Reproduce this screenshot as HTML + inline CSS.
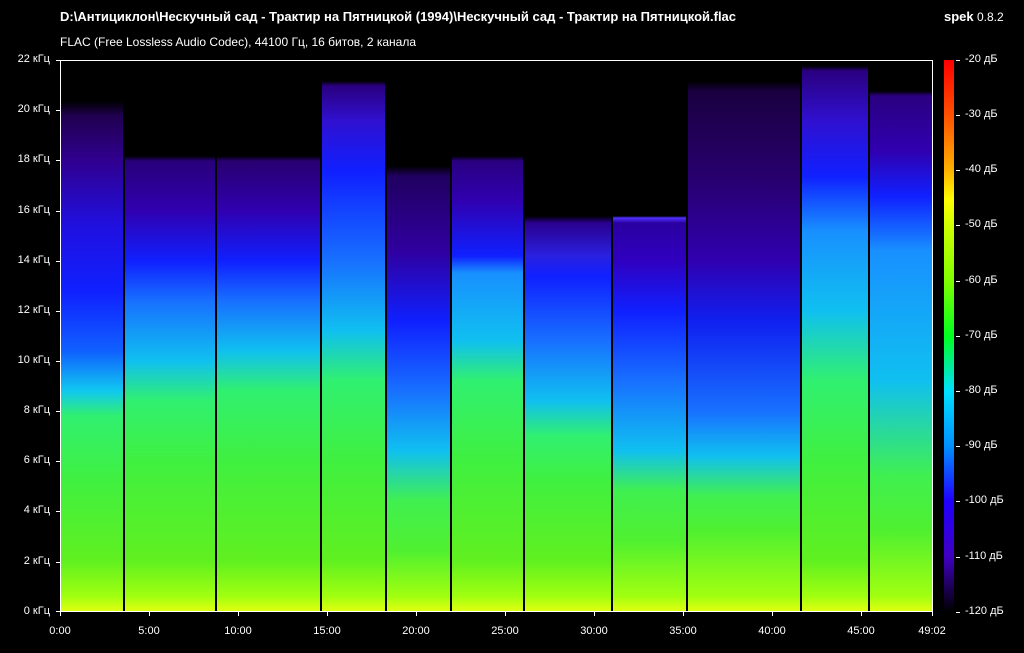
<!DOCTYPE html>
<html><head><meta charset="utf-8"><style>
body{margin:0;width:1024px;height:653px;background:#000;overflow:hidden;position:relative;font-family:"Liberation Sans","DejaVu Sans",sans-serif;color:#fff}
.t{position:absolute;white-space:nowrap;font-size:12px}
#plot{position:absolute;left:60px;top:60px;width:873px;height:552px;border:1px solid #fff;box-sizing:border-box;overflow:hidden;background:#000}
.s{position:absolute;top:0;height:552px}
.yl{position:absolute;right:974px;font-size:11px;white-space:nowrap}
.yt{position:absolute;left:56px;width:4px;height:1px;background:#fff}
.xt{position:absolute;top:612px;width:1px;height:4px;background:#fff}
.xl{position:absolute;top:625px;font-size:11px;transform:translateX(-50%)}
.dl{position:absolute;left:965px;font-size:11px;white-space:nowrap}
.dt{position:absolute;left:956px;width:4px;height:1px;background:#fff}
</style></head><body>
<div class="t" style="left:60px;top:9px;font-weight:bold;font-size:13px">D:\Антициклон\Нескучный сад - Трактир на Пятницкой (1994)\Нескучный сад - Трактир на Пятницкой.flac</div>
<div class="t" style="left:944px;top:9px;font-size:12px"><b style="font-size:13px">spek</b> 0.8.2</div>
<div class="t" style="left:60px;top:35px;font-size:12px">FLAC (Free Lossless Audio Codec), 44100 Гц, 16 битов, 2 канала</div>
<div id="plot">
<div class="s" style="left:0;width:62px;background:linear-gradient(#000 0,#000 40px,#200050 55px,#300090 100px,#2010e0 165px,#1020ff 230px,#1060ff 290px,#10c8f0 330px,#30f070 355px,#40f040 420px,#60f020 500px,#a0ff10 535px,#e8ff10 552px)"></div>
<div class="s" style="left:64px;width:90px;background:linear-gradient(#000 0,#000 95px,#28007a 100px,#3000b0 150px,#1020ff 200px,#1870ff 240px,#10c0f0 300px,#30f070 340px,#40f040 400px,#60f020 500px,#a0ff10 535px,#e8ff10 552px)"></div>
<div class="s" style="left:156px;width:103px;background:linear-gradient(#000 0,#000 95px,#280070 100px,#3000b0 150px,#1020ff 200px,#1870ff 240px,#10c0f0 290px,#30f070 330px,#40f040 400px,#60f020 500px,#a0ff10 535px,#e8ff10 552px)"></div>
<div class="s" style="left:261px;width:63px;background:linear-gradient(#000 0,#000 20px,#2a0080 25px,#3010d0 60px,#1020ff 110px,#1870ff 200px,#10c0f0 270px,#30f070 320px,#40f040 400px,#60f020 500px,#a0ff10 535px,#e8ff10 552px)"></div>
<div class="s" style="left:326px;width:63px;background:linear-gradient(#000 0,#000 105px,#200060 115px,#3000a0 190px,#1020ff 260px,#1870ff 330px,#10c0f0 390px,#40f050 440px,#50f030 490px,#a0ff10 535px,#e8ff10 552px)"></div>
<div class="s" style="left:391px;width:71px;background:linear-gradient(#000 0,#000 95px,#2a0080 100px,#3000b0 140px,#1020ff 195px,#1890ff 212px,#10c0f0 280px,#30f070 320px,#40f040 400px,#60f020 500px,#a0ff10 535px,#e8ff10 552px)"></div>
<div class="s" style="left:464px;width:86px;background:linear-gradient(#000 0,#000 155px,#2a0090 162px,#2a20e0 195px,#1020ff 215px,#1870ff 280px,#10c0f0 340px,#30f070 375px,#40f040 420px,#60f020 500px,#a0ff10 535px,#e8ff10 552px)"></div>
<div class="s" style="left:552px;width:73px;background:linear-gradient(#000 0,#000 155px,#5030ff 157px,#2a00a0 162px,#3000c0 200px,#1020ff 250px,#1870ff 320px,#10c0f0 390px,#40f050 430px,#50f030 480px,#a0ff10 535px,#e8ff10 552px)"></div>
<div class="s" style="left:627px;width:112px;background:linear-gradient(#000 0,#000 20px,#1a0040 30px,#280070 120px,#3000b0 200px,#1020f0 260px,#1870ff 350px,#10c0f0 395px,#40f050 435px,#50f030 470px,#a0ff10 535px,#e8ff10 552px)"></div>
<div class="s" style="left:741px;width:66px;background:linear-gradient(#000 0,#000 5px,#2a0080 10px,#3010d0 60px,#1020ff 115px,#1890ff 170px,#10c0f0 250px,#30f070 320px,#40f040 400px,#60f020 500px,#a0ff10 535px,#e8ff10 552px)"></div>
<div class="s" style="left:809px;width:62px;background:linear-gradient(#000 0,#000 30px,#2a0080 35px,#3000b0 90px,#1020ff 135px,#1890ff 190px,#10c0f0 320px,#40f050 415px,#50f030 470px,#a0ff10 535px,#e8ff10 552px)"></div>
</div>
<div style="position:absolute;left:944px;top:60px;width:10px;height:552px;background:linear-gradient(#ff0000 0,#ff5000 55px,#ffb000 110px,#ffff00 140px,#d0ff00 165px,#80ff00 221px,#00ff20 276px,#00e0ff 331px,#0090ff 386px,#2000ff 441px,#4000c0 497px,#000 552px)"></div>
<div class="yt" style="top:60px"></div><div class="yl" style="top:53px">22 кГц</div>
<div class="yt" style="top:110px"></div><div class="yl" style="top:103px">20 кГц</div>
<div class="yt" style="top:160px"></div><div class="yl" style="top:153px">18 кГц</div>
<div class="yt" style="top:211px"></div><div class="yl" style="top:204px">16 кГц</div>
<div class="yt" style="top:261px"></div><div class="yl" style="top:254px">14 кГц</div>
<div class="yt" style="top:311px"></div><div class="yl" style="top:304px">12 кГц</div>
<div class="yt" style="top:361px"></div><div class="yl" style="top:354px">10 кГц</div>
<div class="yt" style="top:411px"></div><div class="yl" style="top:404px">8 кГц</div>
<div class="yt" style="top:461px"></div><div class="yl" style="top:454px">6 кГц</div>
<div class="yt" style="top:511px"></div><div class="yl" style="top:504px">4 кГц</div>
<div class="yt" style="top:562px"></div><div class="yl" style="top:555px">2 кГц</div>
<div class="yt" style="top:611px"></div><div class="yl" style="top:605px">0 кГц</div>
<div class="xt" style="left:60px"></div><div class="xl" style="left:60px">0:00</div>
<div class="xt" style="left:149px"></div><div class="xl" style="left:149px">5:00</div>
<div class="xt" style="left:238px"></div><div class="xl" style="left:238px">10:00</div>
<div class="xt" style="left:327px"></div><div class="xl" style="left:327px">15:00</div>
<div class="xt" style="left:416px"></div><div class="xl" style="left:416px">20:00</div>
<div class="xt" style="left:505px"></div><div class="xl" style="left:505px">25:00</div>
<div class="xt" style="left:594px"></div><div class="xl" style="left:594px">30:00</div>
<div class="xt" style="left:683px"></div><div class="xl" style="left:683px">35:00</div>
<div class="xt" style="left:772px"></div><div class="xl" style="left:772px">40:00</div>
<div class="xt" style="left:861px"></div><div class="xl" style="left:861px">45:00</div>
<div class="xt" style="left:932px"></div><div class="xl" style="left:932px">49:02</div>
<div class="dt" style="top:60px"></div><div class="dl" style="top:53px">-20 дБ</div>
<div class="dt" style="top:115px"></div><div class="dl" style="top:108px">-30 дБ</div>
<div class="dt" style="top:170px"></div><div class="dl" style="top:163px">-40 дБ</div>
<div class="dt" style="top:225px"></div><div class="dl" style="top:218px">-50 дБ</div>
<div class="dt" style="top:281px"></div><div class="dl" style="top:274px">-60 дБ</div>
<div class="dt" style="top:336px"></div><div class="dl" style="top:329px">-70 дБ</div>
<div class="dt" style="top:391px"></div><div class="dl" style="top:384px">-80 дБ</div>
<div class="dt" style="top:446px"></div><div class="dl" style="top:439px">-90 дБ</div>
<div class="dt" style="top:501px"></div><div class="dl" style="top:494px">-100 дБ</div>
<div class="dt" style="top:557px"></div><div class="dl" style="top:550px">-110 дБ</div>
<div class="dt" style="top:612px"></div><div class="dl" style="top:605px">-120 дБ</div>
</body></html>
